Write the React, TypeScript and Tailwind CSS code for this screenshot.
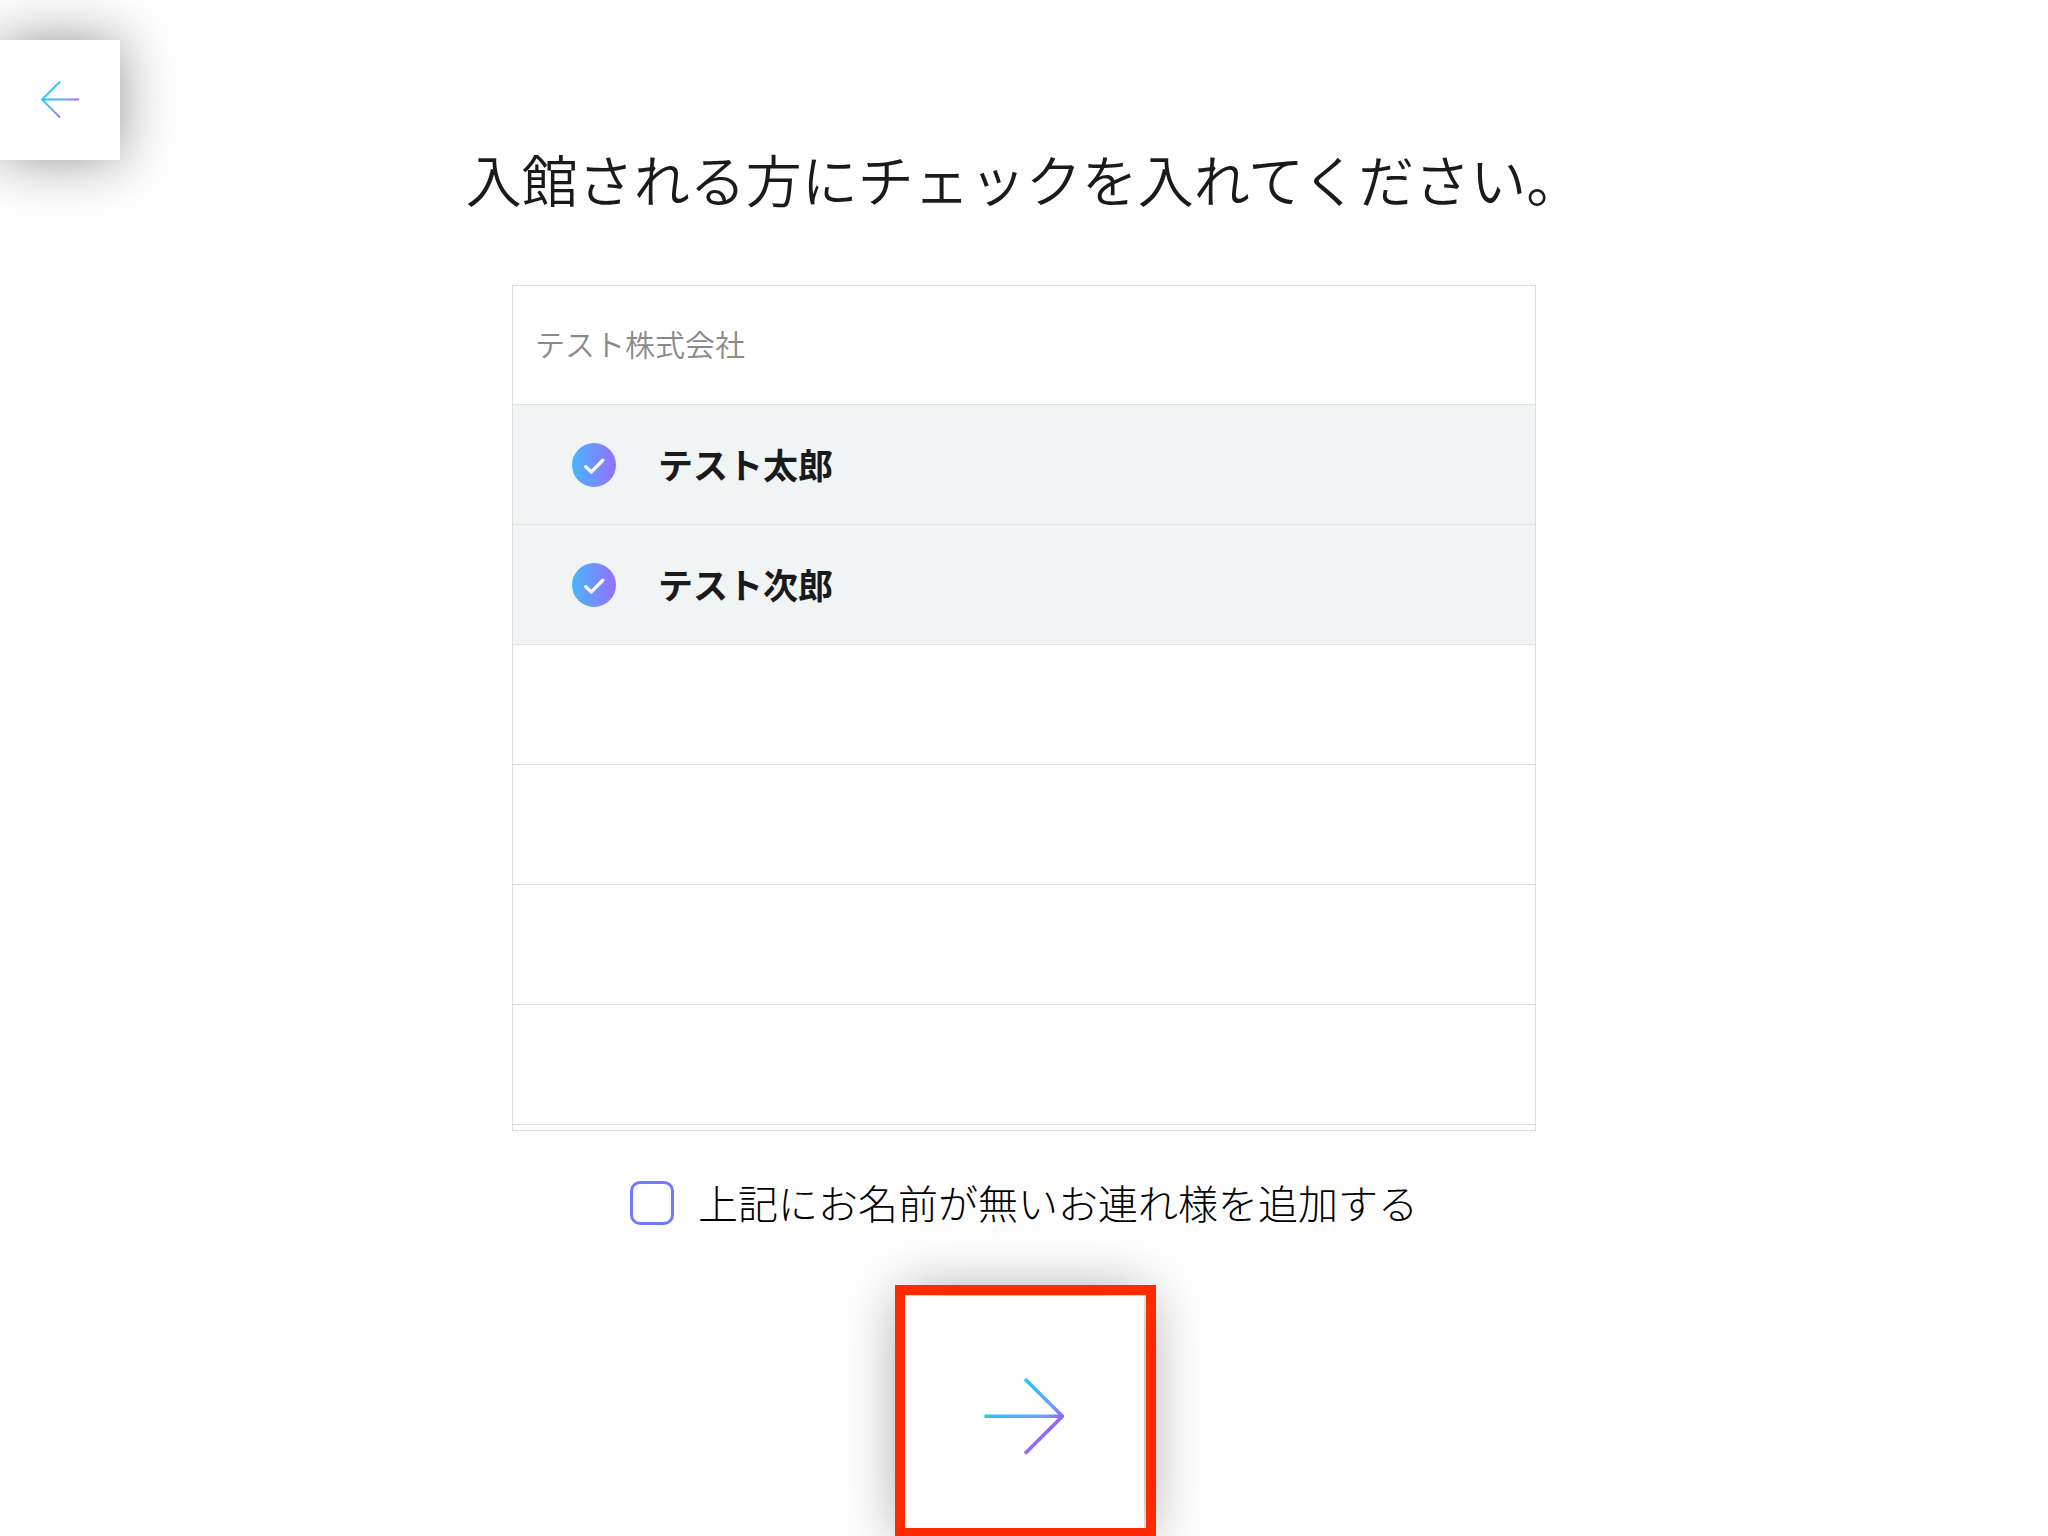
import { useState } from 'react';

type Visitor = { id: number; name: string };

const COMPANY = 'テスト株式会社';

const VISITORS: Visitor[] = [
  { id: 1, name: 'テスト太郎' },
  { id: 2, name: 'テスト次郎' },
];

const EMPTY_ROWS = 4;

function BackArrow() {
  return (
    <svg width="40" height="40" viewBox="0 0 40 40" fill="none" aria-hidden="true">
      <defs>
        <linearGradient id="back-gradient" gradientUnits="userSpaceOnUse" x1="10.5" y1="11" x2="29" y2="29.5">
          <stop offset="0" stopColor="#26c5f8" />
          <stop offset="0.65" stopColor="#6fa0ff" />
          <stop offset="1" stopColor="#9466ff" />
        </linearGradient>
      </defs>
      <path d="M39 19.5H2M20 1.5L2 19.5l18 18" stroke="url(#back-gradient)" strokeWidth="1.8" />
    </svg>
  );
}

function NextArrow() {
  return (
    <svg width="80" height="80" viewBox="0 0 80 80" fill="none" aria-hidden="true">
      <defs>
        <linearGradient id="next-gradient" gradientUnits="userSpaceOnUse" x1="20" y1="20" x2="59" y2="59">
          <stop offset="0" stopColor="#26c5f8" />
          <stop offset="0.75" stopColor="#6fa0ff" />
          <stop offset="1" stopColor="#9466ff" />
        </linearGradient>
      </defs>
      <path d="M0.500 40.200h78M41 3l37.500 37.200L41 77.500" stroke="url(#next-gradient)" strokeWidth="3.6" />
    </svg>
  );
}

function VisitorRow({ visitor, checked, onToggle }: { visitor: Visitor; checked: boolean; onToggle: () => void }) {
  return (
    <li className={`h-[120px] border-b border-[#e2e4e4] ${checked ? 'bg-[#f0f4f5]' : ''}`}>
      <label className="flex h-full cursor-pointer items-center gap-[42px] px-[59px]">
        <span className="grid size-11 place-items-center">
          <input
            type="checkbox"
            checked={checked}
            onChange={onToggle}
            className="col-start-1 row-start-1 size-11 appearance-none rounded-full border-[3px] border-[#6f7bff] checked:border-0 checked:bg-linear-to-r/srgb checked:from-[#48b4ff] checked:to-[#9670ff]"
          />
          {checked && (
            <svg width="22" height="18" viewBox="0 0 22 18" fill="none" aria-hidden="true" className="pointer-events-none col-start-1 row-start-1">
              <path d="M2.500 10.500l5.800 5.400L20 4" stroke="#f4f7ff" strokeWidth="3.4" />
              <circle cx="2.5" cy="10.5" r="1.6" fill="#f4f7ff" />
              <circle cx="20" cy="4" r="1.6" fill="#f4f7ff" />
            </svg>
          )}
        </span>
        <span className="text-[35px] font-bold">{visitor.name}</span>
      </label>
    </li>
  );
}

export default function App() {
  const [selected, setSelected] = useState<number[]>([1, 2]);
  const [addGuest, setAddGuest] = useState(false);

  const toggle = (id: number) =>
    setSelected((ids) => (ids.includes(id) ? ids.filter((i) => i !== id) : [...ids, id]));

  return (
    <div className="relative flex h-screen flex-col items-center overflow-hidden bg-[#fefefe] font-['Noto_Sans_CJK_JP',sans-serif] text-[#1a1a1a]">
      <button
        type="button"
        aria-label="戻る"
        className="absolute top-10 left-0 flex size-30 items-center justify-center bg-white shadow-[0_0_56px_rgba(0,0,0,0.42)]"
      >
        <BackArrow />
      </button>

      <h1 className="mt-[138px] text-[56px] leading-20 font-[350]">入館される方にチェックを入れてください。</h1>

      <section className="mt-[67px] w-1/2 border border-[#dcdede] bg-white pb-[5px]">
        <h2 className="flex h-[119px] items-center border-b border-[#e2e4e4] px-[22px] pb-1 text-3xl font-[350] text-[#8a8a8a]">
          {COMPANY}
        </h2>
        <ul>
          {VISITORS.map((visitor) => (
            <VisitorRow
              key={visitor.id}
              visitor={visitor}
              checked={selected.includes(visitor.id)}
              onToggle={() => toggle(visitor.id)}
            />
          ))}
          {Array.from({ length: EMPTY_ROWS }, (_, i) => (
            <li key={i} className="h-[120px] border-b border-[#e2e4e4]" />
          ))}
        </ul>
      </section>

      <label className="mt-[42px] flex h-[60px] cursor-pointer items-center gap-6 text-[40px] leading-[60px] font-light text-black">
        <input
          type="checkbox"
          checked={addGuest}
          onChange={(e) => setAddGuest(e.target.checked)}
          className="size-11 appearance-none rounded-[10px] border-[3px] border-[#6f7bff] checked:bg-[#6f7bff]"
        />
        <span className="pb-0.5">上記にお名前が無いお連れ様を追加する</span>
      </label>

      <div className="relative mt-[63px] shrink-0">
        <button
          type="button"
          aria-label="次へ"
          className="flex size-60 items-center justify-center bg-white shadow-[0_0_56px_rgba(0,0,0,0.42)]"
        >
          <NextArrow />
        </button>
        <div className="pointer-events-none absolute -top-[11px] -right-3 -bottom-[2px] -left-[9px] border-[10px] border-[#ff2a00]" />
      </div>
    </div>
  );
}
